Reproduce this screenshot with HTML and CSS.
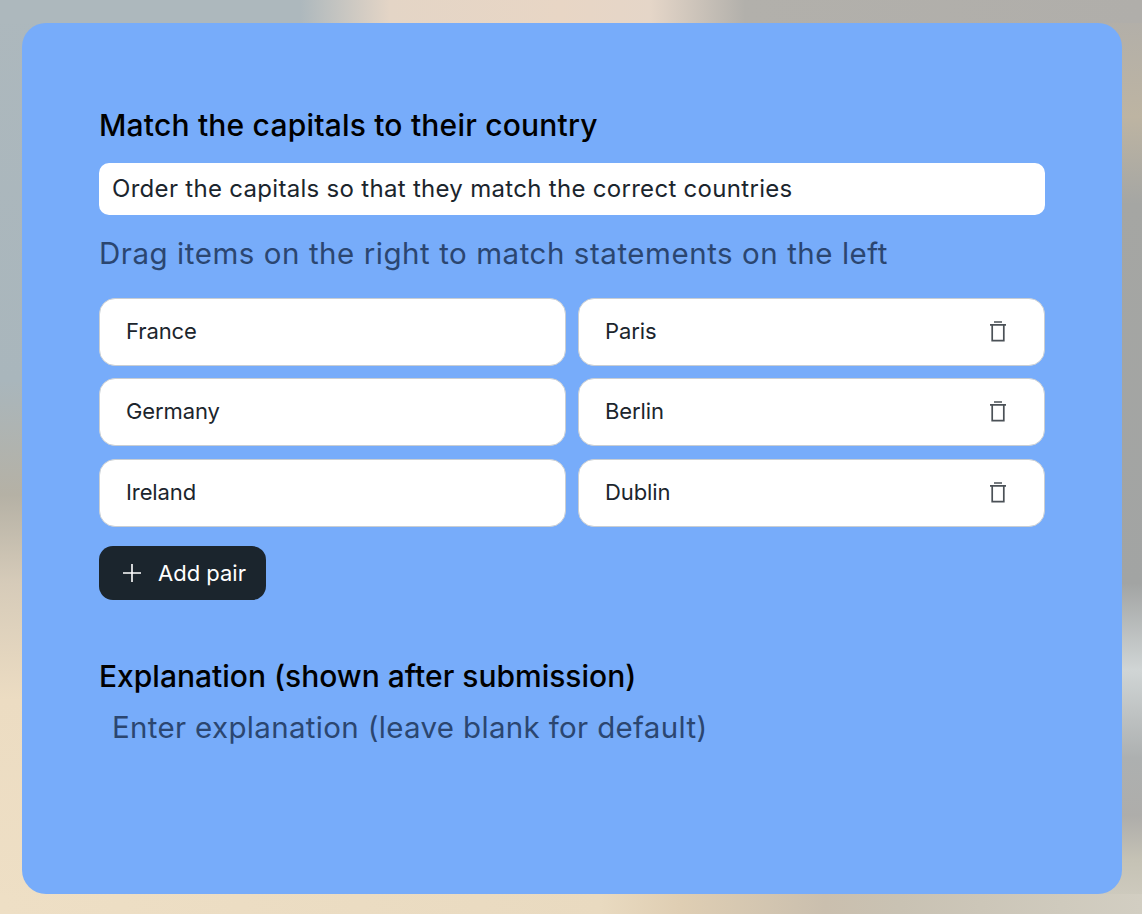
FILE: index.html
```html
<!DOCTYPE html>
<html>
<head>
<meta charset="UTF-8">
<title>Match the capitals</title>
<link rel="stylesheet" href="styles.css">
</head>
<body>
<div class="backdrop">
  <div class="card">
    <h2 class="title">Match the capitals to their country</h2>
    <div class="prompt">Order the capitals so that they match the correct countries</div>
    <p class="hint">Drag items on the right to match statements on the left</p>
    <div class="pairs">
      <div class="item">France</div>
      <div class="item">Paris
        <svg class="trash" width="16" height="22" viewBox="0 0 16 22" fill="none" stroke="#4b5157" stroke-width="1.7"><path d="M4 1h8M0 3.8h16M2.2 3.8V19.6h11.6V3.8"/></svg>
      </div>
      <div class="item">Germany</div>
      <div class="item">Berlin
        <svg class="trash" width="16" height="22" viewBox="0 0 16 22" fill="none" stroke="#4b5157" stroke-width="1.7"><path d="M4 1h8M0 3.8h16M2.2 3.8V19.6h11.6V3.8"/></svg>
      </div>
      <div class="item">Ireland</div>
      <div class="item">Dublin
        <svg class="trash" width="16" height="22" viewBox="0 0 16 22" fill="none" stroke="#4b5157" stroke-width="1.7"><path d="M4 1h8M0 3.8h16M2.2 3.8V19.6h11.6V3.8"/></svg>
      </div>
    </div>
    <button class="add-btn">
      <svg width="18" height="18" viewBox="0 0 18 18" stroke="#fff" stroke-width="1.6"><path d="M9 0v18M0 9h18"/></svg>
      Add pair
    </button>
    <h2 class="title title-second">Explanation (shown after submission)</h2>
    <p class="hint hint-second">Enter explanation (leave blank for default)</p>
  </div>
</div>
</body>
</html>
```

FILE: styles.css
```css
*{margin:0;padding:0;box-sizing:border-box;}
html,body{height:100%;}
body{font-family:"Inter","Noto Sans",sans-serif;overflow:hidden;}
.backdrop{
  height:914px;padding:23px 20px 20px 22px;
  background-repeat:no-repeat;
  background-image:
    linear-gradient(90deg,#adb8bd 0,#adb8bd 300px,#e4d5c6 390px,#e8d6c5 560px,#e5d6c8 650px,#b2b0ab 745px,#b0aeaa 1142px),
    linear-gradient(90deg,#eedfc5 0,#e9dac0 600px,#dfceb3 680px,#cabfae 825px,#c9c2b3 900px,#d2cec2 1142px),
    linear-gradient(180deg,#adb8bd 0,#a9b6bc 380px,#b5b1a5 495px,#d6cbb9 583px,#ecdcc2 700px,#eedfc5 914px),
    linear-gradient(180deg,#b0aeaa 0,#bdb4a2 117px,#a5a6a3 204px,#a2a4a3 583px,#d0d5d5 670px,#adb0b0 758px,#aeadaa 816px,#c5c2b5 860px,#d2cec2 914px);
  background-size:100% 23px,100% 20px,60px 100%,60px 100%;
  background-position:0 0,0 100%,0 0,100% 0;
}
.card{height:871px;background:#77acfa;border-radius:24px;padding:82px 77px 0;}
.title{font-size:30px;line-height:40px;font-weight:500;color:#000;letter-spacing:.2px;}
.prompt{margin-top:18px;height:52px;background:#fff;border-radius:10px;padding:0 13px;font-size:24px;line-height:52px;color:#1b252d;letter-spacing:.3px;}
.hint{margin-top:16px;font-size:29.5px;line-height:44px;color:#2b4670;letter-spacing:.55px;}
.pairs{margin-top:22.5px;display:grid;grid-template-columns:1fr 1fr;gap:12.5px 12px;}
.item{height:68px;background:#fff;border:1px solid #c9ced3;border-radius:16px;padding:0 26px 2px;display:flex;align-items:center;justify-content:space-between;font-size:22px;letter-spacing:-.1px;color:#1b252d;}
.trash{margin:2px 12px 0 0;}
.add-btn{margin-top:19.5px;height:54px;width:167px;background:#1b252d;border:none;border-radius:14px;display:flex;align-items:center;gap:17px;padding-left:24px;font:inherit;font-size:22px;color:#fff;}
.title-second{margin-top:56px;letter-spacing:0;}
.hint-second{margin-top:9px;padding-left:13px;letter-spacing:.33px;}
```
